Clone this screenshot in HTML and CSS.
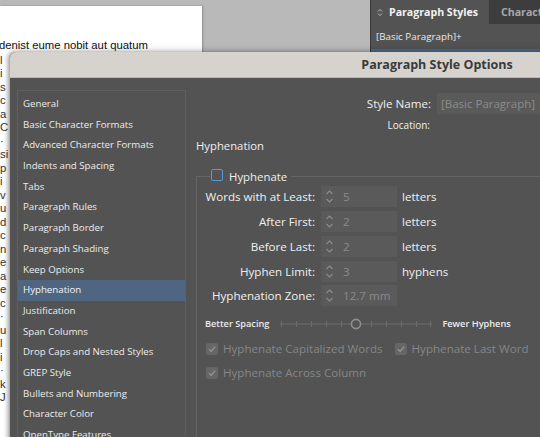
FILE: index.html
```html
<!DOCTYPE html>
<html>
<head>
<meta charset="utf-8">
<link rel="stylesheet" href="styles.css">
</head>
<body>
<div class="workspace">
  <div class="doc-page">
    <p class="doc-line first">denist eume nobit aut quatum</p>
    <div class="doc-strip">
      <p class="doc-line">l</p>
      <p class="doc-line">i</p>
      <p class="doc-line">s</p>
      <p class="doc-line">c</p>
      <p class="doc-line">a</p>
      <p class="doc-line">C</p>
      <p class="doc-line">·</p>
      <p class="doc-line">si</p>
      <p class="doc-line">p</p>
      <p class="doc-line">i</p>
      <p class="doc-line">v</p>
      <p class="doc-line">u</p>
      <p class="doc-line">d</p>
      <p class="doc-line">c</p>
      <p class="doc-line">n</p>
      <p class="doc-line">e</p>
      <p class="doc-line">a</p>
      <p class="doc-line">e</p>
      <p class="doc-line">c</p>
      <p class="doc-line">·</p>
      <p class="doc-line">u</p>
      <p class="doc-line">l</p>
      <p class="doc-line">i</p>
      <p class="doc-line">·</p>
      <p class="doc-line">k</p>
      <p class="doc-line">J</p>
    </div>
  </div>
  <div class="spacer"></div>
  <div class="styles-panel">
    <div class="tabs">
      <div class="tab active">
        <svg class="tab-icon" width="6" height="9" viewBox="0 0 6 9"><path d="M1 3.5 L3 1.5 L5 3.5 M1 5.5 L3 7.5 L5 5.5" fill="none" stroke="#bdbdbd" stroke-width="1"/></svg>
        <span>Paragraph Styles</span>
      </div>
      <div class="tab">Charact</div>
    </div>
    <div class="panel-body">
      <div class="panel-row">[Basic Paragraph]+</div>
      <div class="panel-selected"></div>
    </div>
  </div>
</div>

<div class="dialog">
  <div class="titlebar">Paragraph Style Options</div>
  <div class="dialog-body">
    <ul class="category-list">
      <li>General</li>
      <li>Basic Character Formats</li>
      <li>Advanced Character Formats</li>
      <li>Indents and Spacing</li>
      <li>Tabs</li>
      <li>Paragraph Rules</li>
      <li>Paragraph Border</li>
      <li>Paragraph Shading</li>
      <li>Keep Options</li>
      <li class="selected">Hyphenation</li>
      <li>Justification</li>
      <li>Span Columns</li>
      <li>Drop Caps and Nested Styles</li>
      <li>GREP Style</li>
      <li>Bullets and Numbering</li>
      <li>Character Color</li>
      <li>OpenType Features</li>
    </ul>
    <div class="content">
      <div class="name-row">
        <span class="name-label">Style Name:</span>
        <span class="name-input">[Basic Paragraph]</span>
      </div>
      <div class="loc-row">
        <span class="loc-label">Location:</span>
      </div>
      <div class="section-title">Hyphenation</div>
      <div class="group">
        <div class="legend">
          <span class="check-blue"></span>
          <span>Hyphenate</span>
        </div>
        <div class="fields">
          <span class="f-label">Words with at Least:</span>
          <span class="spin"><svg width="9" height="15" viewBox="0 0 9 15"><path d="M1.5 5 L4.5 2 L7.5 5 M1.5 10 L4.5 13 L7.5 10" fill="none" stroke="#8e8e8e" stroke-width="1.1"/></svg><span class="spin-val">5</span></span>
          <span class="f-unit">letters</span>

          <span class="f-label">After First:</span>
          <span class="spin"><svg width="9" height="15" viewBox="0 0 9 15"><path d="M1.5 5 L4.5 2 L7.5 5 M1.5 10 L4.5 13 L7.5 10" fill="none" stroke="#8e8e8e" stroke-width="1.1"/></svg><span class="spin-val">2</span></span>
          <span class="f-unit">letters</span>

          <span class="f-label">Before Last:</span>
          <span class="spin"><svg width="9" height="15" viewBox="0 0 9 15"><path d="M1.5 5 L4.5 2 L7.5 5 M1.5 10 L4.5 13 L7.5 10" fill="none" stroke="#8e8e8e" stroke-width="1.1"/></svg><span class="spin-val">2</span></span>
          <span class="f-unit">letters</span>

          <span class="f-label">Hyphen Limit:</span>
          <span class="spin"><svg width="9" height="15" viewBox="0 0 9 15"><path d="M1.5 5 L4.5 2 L7.5 5 M1.5 10 L4.5 13 L7.5 10" fill="none" stroke="#8e8e8e" stroke-width="1.1"/></svg><span class="spin-val">3</span></span>
          <span class="f-unit">hyphens</span>

          <span class="f-label">Hyphenation Zone:</span>
          <span class="spin"><svg width="9" height="15" viewBox="0 0 9 15"><path d="M1.5 5 L4.5 2 L7.5 5 M1.5 10 L4.5 13 L7.5 10" fill="none" stroke="#8e8e8e" stroke-width="1.1"/></svg><span class="spin-val">12.7 mm</span></span>
          <span class="f-unit"></span>
        </div>
        <div class="slider-row">
          <span class="slider-label">Better Spacing</span>
          <svg class="slider" width="152" height="14" viewBox="0 0 152 14">
            <line x1="0" y1="7" x2="152" y2="7" stroke="#6c6c6c" stroke-width="1"/>
            <g stroke="#6c6c6c" stroke-width="1">
              <line x1="1.5" y1="4" x2="1.5" y2="10"/>
              <line x1="16.5" y1="4" x2="16.5" y2="10"/>
              <line x1="31.5" y1="4" x2="31.5" y2="10"/>
              <line x1="46.5" y1="4" x2="46.5" y2="10"/>
              <line x1="61.5" y1="4" x2="61.5" y2="10"/>
              <line x1="91.5" y1="4" x2="91.5" y2="10"/>
              <line x1="106.5" y1="4" x2="106.5" y2="10"/>
              <line x1="121.5" y1="4" x2="121.5" y2="10"/>
              <line x1="136.5" y1="4" x2="136.5" y2="10"/>
              <line x1="150.5" y1="4" x2="150.5" y2="10"/>
            </g>
            <circle cx="76" cy="7" r="4.6" fill="#535353" stroke="#8f8f8f" stroke-width="1.6"/>
          </svg>
          <span class="slider-label right">Fewer Hyphens</span>
        </div>
        <div class="check-row">
          <span class="check-item"><span class="check-dis"><svg width="12" height="12" viewBox="0 0 12 12"><path d="M3 6.2 L5.2 8.4 L9 3.8" fill="none" stroke="#8f8f8f" stroke-width="1.5"/></svg></span>Hyphenate Capitalized Words</span>
          <span class="check-item"><span class="check-dis"><svg width="12" height="12" viewBox="0 0 12 12"><path d="M3 6.2 L5.2 8.4 L9 3.8" fill="none" stroke="#8f8f8f" stroke-width="1.5"/></svg></span>Hyphenate Last Word</span>
        </div>
        <div class="check-row second">
          <span class="check-item"><span class="check-dis"><svg width="12" height="12" viewBox="0 0 12 12"><path d="M3 6.2 L5.2 8.4 L9 3.8" fill="none" stroke="#8f8f8f" stroke-width="1.5"/></svg></span>Hyphenate Across Column</span>
        </div>
      </div>
    </div>
  </div>
</div>
</body>
</html>
```
FILE: styles.css
```css
* { box-sizing: border-box; }
html, body {
  margin: 0;
  padding: 0;
}
body {
  width: 540px;
  height: 437px;
  overflow: hidden;
  background: #b9b9b9;
  position: relative;
  font-family: "Open Sans", "DejaVu Sans", sans-serif;
}
.workspace {
  display: flex;
  height: 437px;
}
.doc-page {
  width: 202px;
  margin-top: 6px;
  background: #ffffff;
  overflow: hidden;
  padding-top: 33px;
  box-shadow: 1px 0 2px rgba(0,0,0,0.25);
}
.doc-line {
  margin: 0 0 0 -1px;
  height: 13.5px;
  line-height: 13.5px;
  font-family: "Liberation Sans", Arial, sans-serif;
  font-size: 11.3px;
  color: #111;
  white-space: nowrap;
}
.doc-strip {
  width: 10px;
  padding-top: 1px;
}
.doc-strip .doc-line {
  margin-left: 0;
  color: #333;
}
.spacer { flex: 1; }
.styles-panel {
  width: 170px;
  height: 52px;
  background: #535353;
  border-left: 1px solid #3a3a3a;
  overflow: hidden;
}
.tabs {
  display: flex;
  height: 24px;
  background: #3d3d3d;
}
.tab {
  display: flex;
  align-items: center;
  padding: 0 12px;
  font-size: 10.6px;
  font-weight: 700;
  color: #a8a8a8;
  white-space: nowrap;
}
.tab.active {
  width: 118px;
  background: #535353;
  color: #f2f2f2;
  padding-left: 6px;
  gap: 6px;
}
.tab-icon { flex: none; }
.panel-body {
  height: 28px;
  display: flex;
  flex-direction: column;
}
.panel-row {
  height: 25px;
  line-height: 26px;
  padding-left: 5px;
  font-size: 9.8px;
  font-weight: 500;
  color: #e8e8e8;
}
.panel-selected {
  height: 3px;
  background: #4d6c91;
}

/* dialog */
.dialog {
  position: absolute;
  left: 10px;
  top: 52px;
  width: 854px;
  height: 400px;
  background: #535353;
  border-radius: 6px 6px 0 0;
  box-shadow: -2px 0 4px rgba(0,0,0,0.35), 0 -2px 8px rgba(0,0,0,0.12);
  overflow: hidden;
}
.titlebar {
  height: 26px;
  background: #d6d2ce;
  border-bottom: 1px solid #bdb9b5;
  text-align: center;
  line-height: 26px;
  font-size: 12.5px;
  font-weight: 700;
  color: #3a3a3a;
}
.dialog-body {
  display: grid;
  grid-template-columns: 169px 1fr;
  column-gap: 10px;
  padding: 12px 0 0 7px;
}
.category-list {
  list-style: none;
  margin: 0;
  padding: 3px 0 0 0;
  border: 1px solid #5f5f5f;
  height: 380px;
}
.category-list li {
  height: 20.7px;
  line-height: 20.7px;
  padding-left: 5px;
  font-size: 9.7px;
  font-weight: 500;
  color: #ececec;
  white-space: nowrap;
}
.category-list li.selected {
  background: #4e6682;
  color: #f4f4f4;
}

.content {
  color: #efefef;
  padding-top: 2px;
}
.name-row {
  display: flex;
  align-items: center;
  height: 21px;
  margin-top: 1px;
  gap: 6px;
}
.name-label {
  width: 235px;
  text-align: right;
  font-size: 11.6px;
  font-weight: 500;
}
.name-input {
  width: 200px;
  height: 21px;
  line-height: 21px;
  background: #5a5a5a;
  padding-left: 4px;
  font-size: 11.5px;
  color: #8c8c8c;
}
.loc-row {
  height: 22px;
  display: flex;
  align-items: center;
}
.loc-label {
  width: 234px;
  text-align: right;
  font-size: 10px;
  font-weight: 500;
}
.section-title {
  height: 19px;
  line-height: 19px;
  font-size: 11.3px;
  font-weight: 500;
}
.group {
  margin-top: 21px;
  border-top: 1px solid #666666;
  border-left: 1px solid #666666;
  height: 300px;
}
.legend {
  display: flex;
  align-items: center;
  gap: 6px;
  margin: -9px 0 0 13px;
  padding: 0 4px 0 1px;
  width: fit-content;
  height: 16px;
  background: #535353;
  font-size: 11.4px;
  font-weight: 500;
  color: #efefef;
}
.check-blue {
  width: 12px;
  height: 12px;
  border: 1px solid #5a98dc;
  border-radius: 2px;
  margin-top: -2px;
}
.fields {
  display: grid;
  grid-template-columns: 118px 76px auto;
  grid-auto-rows: 24.75px;
  column-gap: 6px;
  align-items: center;
  margin-top: 0.5px;
}
.f-label {
  text-align: right;
  font-size: 11.6px;
  font-weight: 500;
  white-space: nowrap;
}
.f-unit {
  font-size: 11.6px;
  font-weight: 500;
  margin-left: -1px;
}
.spin {
  display: flex;
  align-items: center;
  height: 21px;
  background: #5a5a5a;
  padding-left: 4px;
}
.spin-val {
  margin-left: 9px;
  font-size: 11.6px;
  color: #8a8a8a;
}
.slider-row {
  display: flex;
  align-items: center;
  height: 20px;
  margin-top: 5.6px;
  padding-left: 8px;
}
.slider-label {
  font-size: 9.2px;
  font-weight: 600;
  color: #ececec;
  white-space: nowrap;
}
.slider {
  margin-left: 11px;
  flex: none;
}
.slider-label.right {
  margin-left: 10px;
}
.check-row {
  display: flex;
  align-items: center;
  height: 20px;
  margin-top: 5px;
  padding-left: 9px;
  gap: 12px;
}
.check-row.second { margin-top: 4px; }
.check-item {
  display: flex;
  align-items: center;
  gap: 5px;
  font-size: 11.6px;
  color: #868686;
  white-space: nowrap;
}
.check-dis {
  width: 12px;
  height: 12px;
  border-radius: 2px;
  background: #666666;
  display: flex;
}
```
